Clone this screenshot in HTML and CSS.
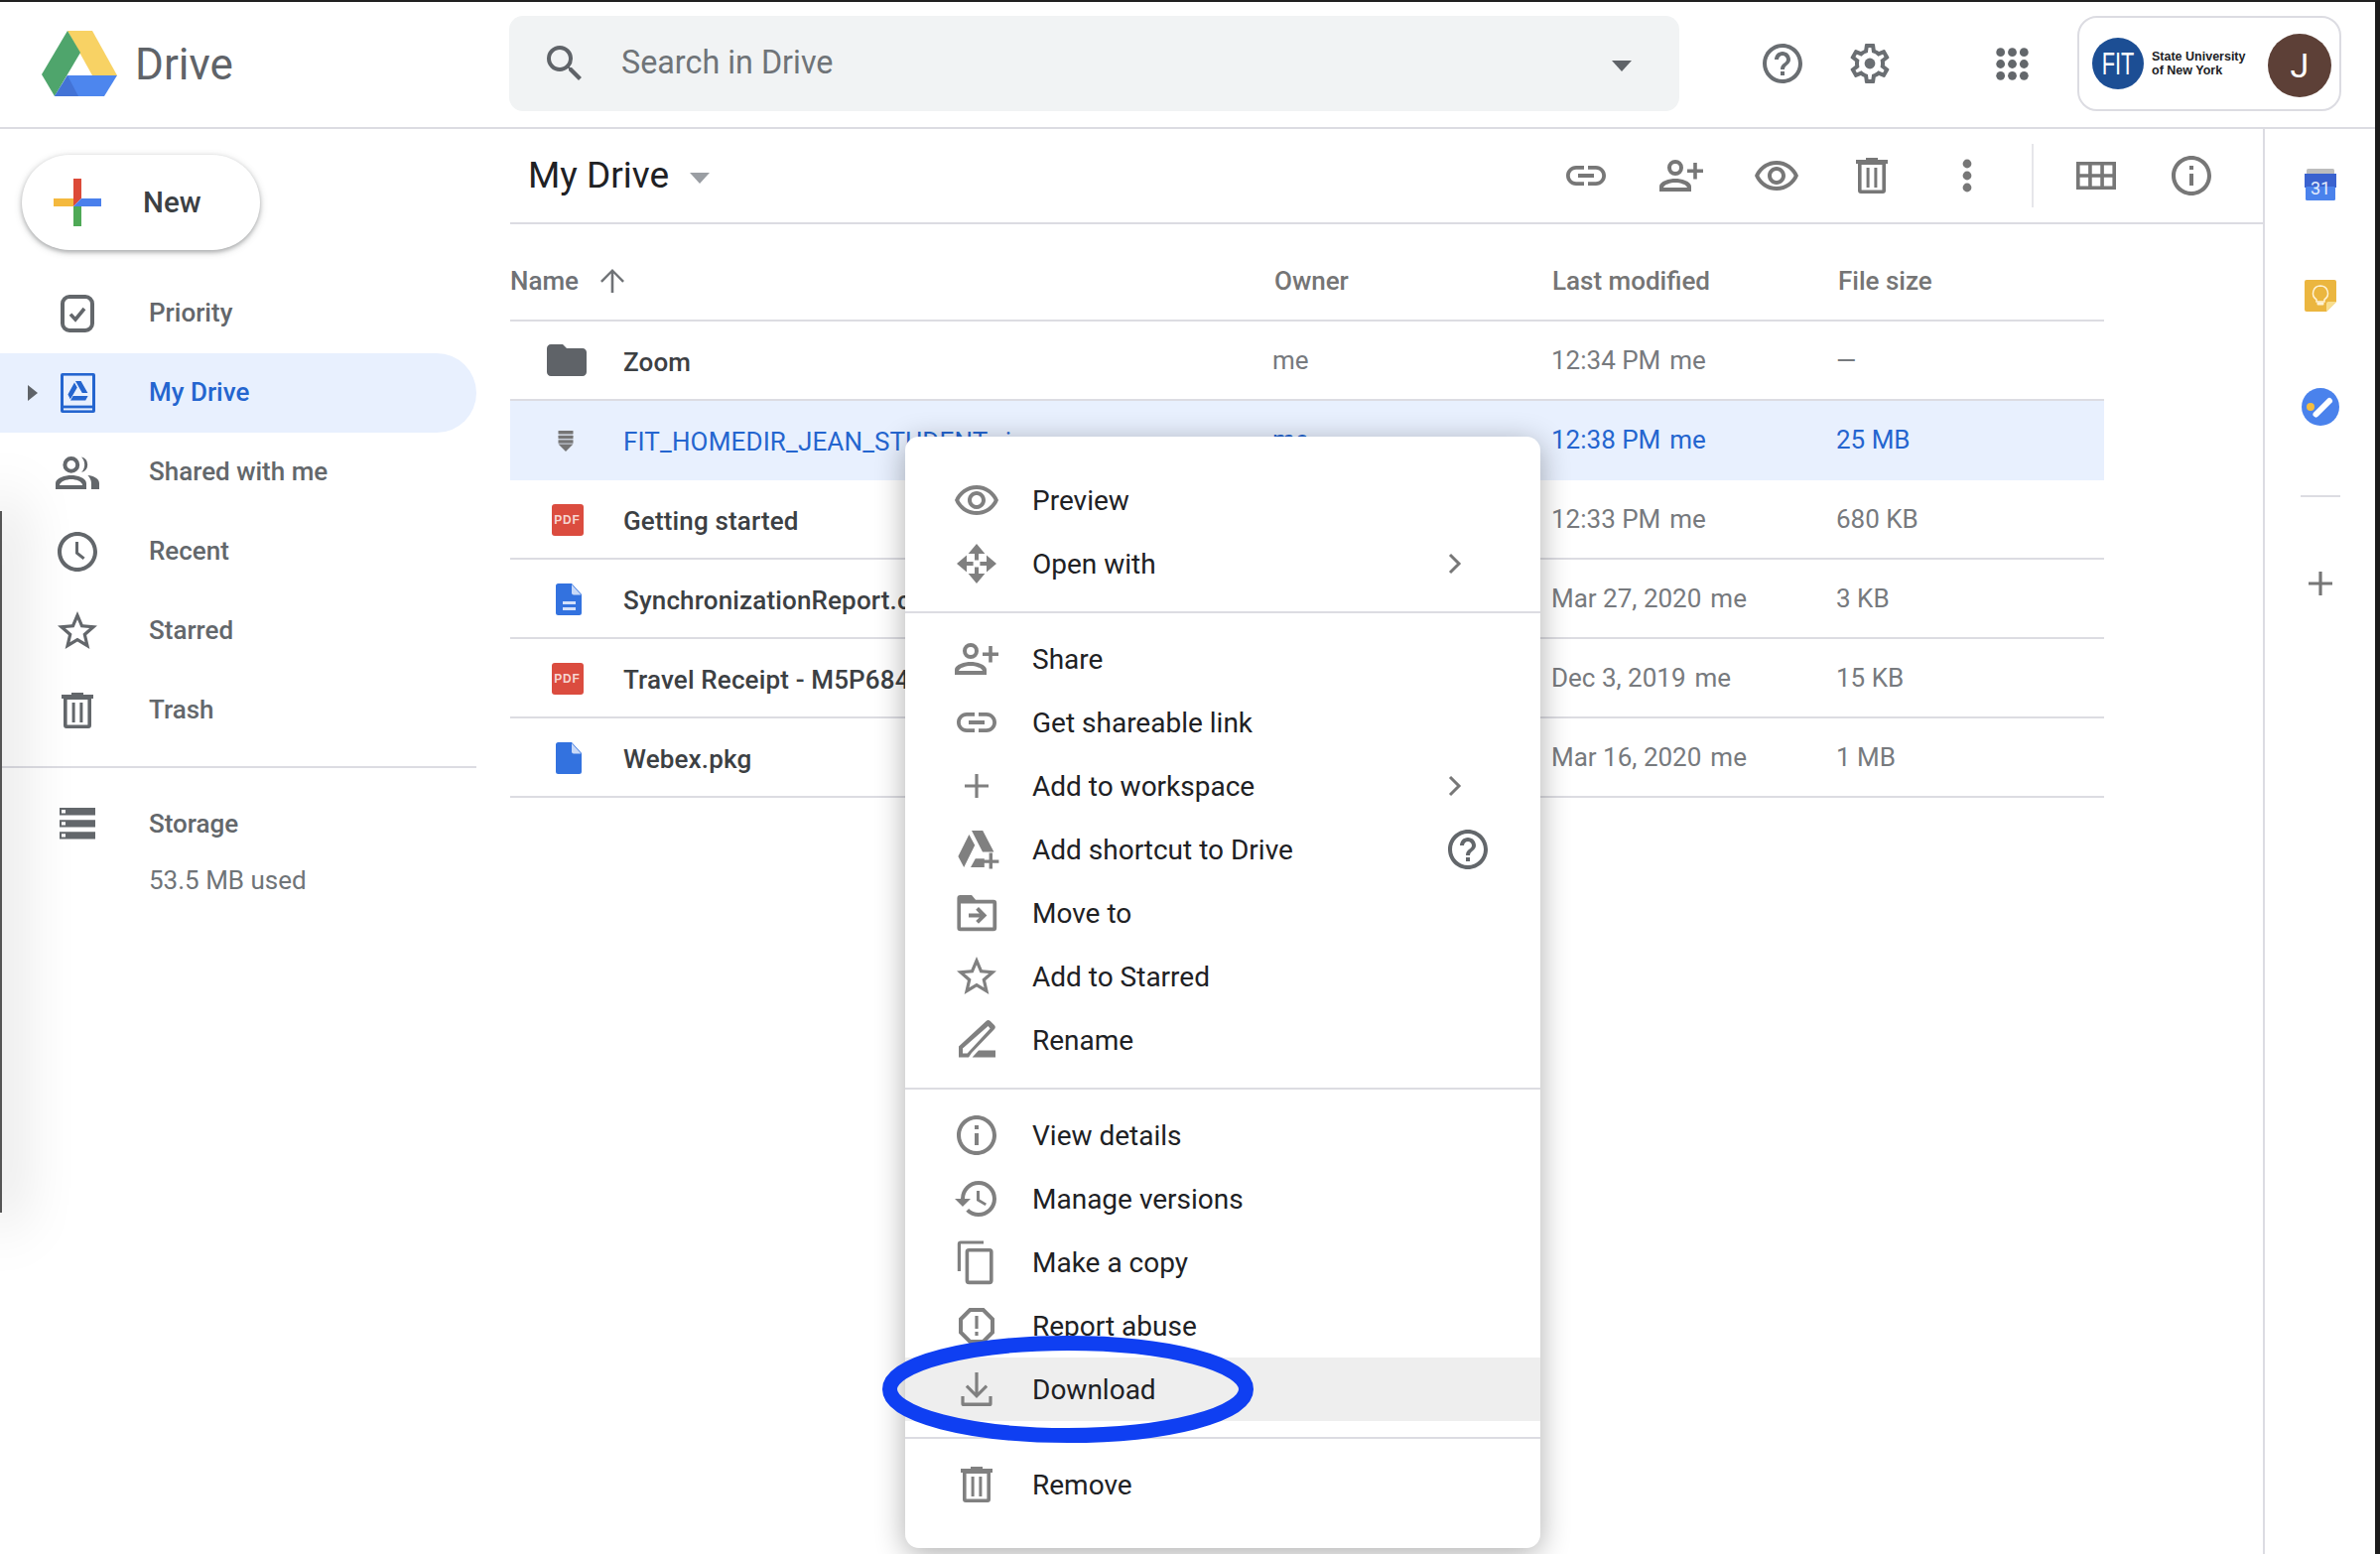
FILE: index.html
```html
<!DOCTYPE html>
<html lang="en">
<head>
<meta charset="utf-8">
<title>My Drive - Google Drive</title>
<link rel="stylesheet" href="styles.css">
</head>
<body>
<svg class="sprite" aria-hidden="true">
  <symbol id="i-search" viewBox="0 0 24 24"><path d="M15.5 14h-.79l-.28-.27A6.471 6.471 0 0 0 16 9.5 6.5 6.5 0 1 0 9.5 16c1.61 0 3.09-.59 4.23-1.57l.27.28v.79l5 4.99L20.49 19l-4.99-5zm-6 0C7.01 14 5 11.99 5 9.5S7.01 5 9.5 5 14 7.01 14 9.5 11.99 14 9.5 14z"/></symbol>
  <symbol id="i-help" viewBox="0 0 24 24"><path d="M11 18h2v-2h-2v2zm1-16C6.48 2 2 6.48 2 12s4.48 10 10 10 10-4.48 10-10S17.52 2 12 2zm0 18c-4.41 0-8-3.59-8-8s3.59-8 8-8 8 3.59 8 8-3.59 8-8 8zm0-14c-2.21 0-4 1.79-4 4h2c0-1.1.9-2 2-2s2 .9 2 2c0 2-3 1.75-3 5h2c0-2.25 3-2.5 3-5 0-2.21-1.79-4-4-4z"/></symbol>
  <symbol id="i-gear" viewBox="0 0 24 24"><path d="M19.43 12.98c.04-.32.07-.64.07-.98 0-.34-.03-.66-.07-.98l2.11-1.65c.19-.15.24-.42.12-.64l-2-3.46a.5.5 0 0 0-.61-.22l-2.49 1c-.52-.4-1.08-.73-1.69-.98l-.38-2.65A.488.488 0 0 0 14 2h-4c-.25 0-.46.18-.49.42l-.38 2.65c-.61.25-1.17.59-1.69.98l-2.49-1a.566.566 0 0 0-.18-.03c-.17 0-.34.09-.43.25l-2 3.46c-.13.22-.07.49.12.64l2.11 1.65c-.04.32-.07.65-.07.98 0 .33.03.66.07.98l-2.11 1.65c-.19.15-.24.42-.12.64l2 3.46a.5.5 0 0 0 .61.22l2.49-1c.52.4 1.08.73 1.69.98l.38 2.65c.03.24.24.42.49.42h4c.25 0 .46-.18.49-.42l.38-2.65c.61-.25 1.17-.59 1.69-.98l2.49 1c.06.02.12.03.18.03.17 0 .34-.09.43-.25l2-3.46c.12-.22.07-.49-.12-.64l-2.11-1.65zm-1.98-1.71c.04.31.05.52.05.73 0 .21-.02.43-.05.73l-.14 1.13.89.7 1.08.84-.7 1.21-1.27-.51-1.04-.42-.9.68c-.43.32-.84.56-1.25.73l-1.06.43-.16 1.13-.2 1.35h-1.4l-.19-1.35-.16-1.13-1.06-.43c-.43-.18-.83-.41-1.23-.71l-.91-.7-1.06.43-1.27.51-.7-1.21 1.08-.84.89-.7-.14-1.13c-.03-.31-.05-.54-.05-.74s.02-.43.05-.73l.14-1.13-.89-.7-1.08-.84.7-1.21 1.27.51 1.04.42.9-.68c.43-.32.84-.56 1.25-.73l1.06-.43.16-1.13.2-1.35h1.39l.19 1.35.16 1.13 1.06.43c.43.18.83.41 1.23.71l.91.7 1.06-.43 1.27-.51.7 1.21-1.07.85-.89.7.14 1.13z"/><circle cx="12" cy="12" r="2.7"/></symbol>
  <symbol id="i-apps" viewBox="0 0 24 24"><circle cx="3.4" cy="3.4" r="3.2"/><circle cx="12" cy="3.4" r="3.2"/><circle cx="20.6" cy="3.4" r="3.2"/><circle cx="3.4" cy="12" r="3.2"/><circle cx="12" cy="12" r="3.2"/><circle cx="20.6" cy="12" r="3.2"/><circle cx="3.4" cy="20.6" r="3.2"/><circle cx="12" cy="20.6" r="3.2"/><circle cx="20.6" cy="20.6" r="3.2"/></symbol>
  <symbol id="i-link" viewBox="0 0 24 24"><path d="M3.9 12c0-1.71 1.39-3.1 3.1-3.1h4V7H7c-2.76 0-5 2.24-5 5s2.24 5 5 5h4v-1.9H7c-1.71 0-3.1-1.39-3.1-3.1zM8 13h8v-2H8v2zm9-6h-4v1.9h4c1.71 0 3.1 1.39 3.1 3.1s-1.39 3.1-3.1 3.1h-4V17h4c2.76 0 5-2.24 5-5s-2.24-5-5-5z"/></symbol>
  <symbol id="i-share" viewBox="0 0 24 24"><path fill-rule="evenodd" d="M9 4a4 4 0 1 1 0 8 4 4 0 0 1 0-8zm0 2a2 2 0 1 0 0 4 2 2 0 0 0 0-4zM9 13.5c2.9 0 8 1.3 8 3.9V20H1v-2.6c0-2.6 5.1-3.9 8-3.9zm0 2c-2.4 0-5.7 1-6 2.5h12c-.3-1.5-3.6-2.5-6-2.5z"/><path d="M18.1 5.5h1.8v3.2H23v1.8h-3.1v3.2h-1.8v-3.2H15V8.7h3.1z"/></symbol>
  <symbol id="i-eye" viewBox="0 0 24 24"><path d="M12 6.5c3.79 0 7.17 2.13 8.82 5.5-1.65 3.37-5.02 5.5-8.82 5.5S4.83 15.37 3.18 12C4.83 8.63 8.21 6.5 12 6.5m0-2C7 4.5 2.73 7.61 1 12c1.73 4.39 6 7.5 11 7.5s9.27-3.11 11-7.5c-1.73-4.39-6-7.5-11-7.5zm0 5c1.38 0 2.5 1.12 2.5 2.5s-1.12 2.5-2.5 2.5-2.5-1.12-2.5-2.5 1.12-2.5 2.5-2.5m0-2c-2.48 0-4.5 2.02-4.5 4.5s2.02 4.5 4.5 4.5 4.5-2.02 4.5-4.5-2.02-4.5-4.5-4.5z"/></symbol>
  <symbol id="i-trash" viewBox="0 0 24 24"><path d="M9 3h6v1h5v2H4V4h5z"/><path fill-rule="evenodd" d="M5 6h14v13.5a1.5 1.5 0 0 1-1.5 1.5h-11A1.5 1.5 0 0 1 5 19.5zM6.8 6.5v12.7h10.4V6.5z"/><rect x="9.3" y="8" width="1.5" height="10"/><rect x="13.2" y="8" width="1.5" height="10"/></symbol>
  <symbol id="i-more" viewBox="0 0 24 24"><circle cx="12" cy="6" r="2.2"/><circle cx="12" cy="12" r="2.2"/><circle cx="12" cy="18" r="2.2"/></symbol>
  <symbol id="i-grid" viewBox="0 0 24 24"><path fill-rule="evenodd" d="M2 5h20v14H2zM3.8 6.8v4.3h4.27V6.8zm6.07 0v4.3h4.26V6.8zm6.06 0v4.3h4.27V6.8zM3.8 12.9v4.3h4.27v-4.3zm6.07 0v4.3h4.26v-4.3zm6.06 0v4.3h4.27v-4.3z"/></symbol>
  <symbol id="i-info" viewBox="0 0 24 24"><path d="M11 7h2v2h-2zm0 4h2v6h-2zm1-9C6.48 2 2 6.48 2 12s4.48 10 10 10 10-4.48 10-10S17.52 2 12 2zm0 18c-4.41 0-8-3.59-8-8s3.59-8 8-8 8 3.59 8 8-3.59 8-8 8z"/></symbol>
  <symbol id="i-check" viewBox="0 0 24 24"><rect x="4.5" y="3.5" width="15" height="17" rx="3.5" fill="none" stroke="currentColor" stroke-width="2"/><path d="M8.5 12.3l2.5 2.7 4.5-5.5" fill="none" stroke="currentColor" stroke-width="1.8"/></symbol>
  <symbol id="i-mydrive" viewBox="0 0 24 24"><rect x="3.5" y="2" width="17.5" height="20" rx="1"/><rect x="5" y="3.3" width="14.5" height="15" fill="#e8f0fe"/><rect x="5" y="19.7" width="14.5" height="1" fill="#e8f0fe"/><path d="M11 6h2.8l3.4 6h-2.8zM10.5 6.8l1.4 2.4-2.1 3.7-1.4 2.2-1.2-2.3zM9.8 13.5h7.5l-1.2 2.2H8.5z"/></symbol>
  <symbol id="i-people" viewBox="0 0 24 24"><path fill-rule="evenodd" d="M8.9 4a4.2 4.2 0 1 1 0 8.4 4.2 4.2 0 0 1 0-8.4zm0 2a2.2 2.2 0 1 0 0 4.4 2.2 2.2 0 0 0 0-4.4zM8.9 13.5c3 0 7.6 1.3 7.6 4V20.5H1v-3c0-2.7 4.9-4 7.9-4zm0 2c-2.4 0-5.5 1-5.9 3h11.6c-.3-2-3.3-3-5.7-3z"/><path d="M14 4.2a4 4 0 0 1 0 7.8c1-1 1.6-2.4 1.6-3.9S15 5.2 14 4.2zM17.2 13.5c3 .3 5.8 1.6 5.8 4v3h-4v-3c0-1.5-.7-2.8-1.8-4z"/></symbol>
  <symbol id="i-clock" viewBox="0 0 24 24"><path d="M11.99 2C6.47 2 2 6.48 2 12s4.47 10 9.99 10C17.52 22 22 17.52 22 12S17.52 2 11.99 2zM12 20c-4.42 0-8-3.58-8-8s3.58-8 8-8 8 3.58 8 8-3.58 8-8 8zm.5-13H11v6l3.8 3 1-1.1-3.3-2.7z"/></symbol>
  <symbol id="i-star" viewBox="0 0 24 24"><path d="M22 9.24l-7.19-.62L12 2 9.19 8.63 2 9.24l5.46 4.73L5.82 21 12 17.27 18.18 21l-1.63-7.03L22 9.24zM12 15.4l-3.76 2.27 1-4.28-3.32-2.88 4.38-.38L12 6.1l1.71 4.04 4.38.38-3.32 2.88 1 4.28L12 15.4z"/></symbol>
  <symbol id="i-storage" viewBox="0 0 24 24"><path fill-rule="evenodd" d="M3 4h18v3.7H3zm1 1v1.7h2V5zM3 10.1h18v3.7H3zm1 1v1.7h2v-1.7zM3 16.1h18v3.7H3zm1 1v1.7h2v-1.7z"/></symbol>
  <symbol id="i-folder" viewBox="0 0 24 24"><path d="M10 4H4c-1.1 0-1.99.9-1.99 2L2 18c0 1.1.9 2 2 2h16c1.1 0 2-.9 2-2V8c0-1.1-.9-2-2-2h-8l-2-2z"/></symbol>
  <symbol id="i-archive" viewBox="0 0 24 24"><rect x="4.5" y="2" width="15" height="3.6" rx=".5"/><rect x="4.5" y="6.8" width="15" height="3.4" rx=".5"/><rect x="4.5" y="11.3" width="15" height="3.4"/><path d="M4.5 15.5h15L12 23z"/></symbol>
  <symbol id="i-doc" viewBox="0 0 26 32"><path d="M2.5 0H16l10 11v18.5a2.5 2.5 0 0 1-2.5 2.5h-21A2.5 2.5 0 0 1 0 29.5v-27A2.5 2.5 0 0 1 2.5 0z"/><path d="M16 1l9.5 10.5H18a2 2 0 0 1-2-2z" fill="#c9d9f7"/></symbol>
  <symbol id="i-open" viewBox="0 0 24 24"><path d="M12 2l4.2 5H7.8zM12 22l-4.2-5h8.4zM2 12l5-4.2v8.4zM22 12l-5 4.2V7.8z"/><path d="M11 7h2v3.3h-2zM11 13.7h2V17h-2zM7 11h3.3v2H7zM13.7 11H17v2h-3.3z"/></symbol>
  <symbol id="i-plus" viewBox="0 0 24 24"><path d="M18 12.8h-5.2V18h-1.6v-5.2H6v-1.6h5.2V6h1.6v5.2H18z"/></symbol>
  <symbol id="i-shortcut" viewBox="0 0 24 24"><path d="M9.5 2.5h5.6l5.6 10.8h-5.7zM8.2 4.5l2.9 5.4-5.500 11.100-2.900-5.500zM9 21l2.400-4.400h4.500V21z"/><path d="M19.100 14.500h1.700v3.500h3.200v1.700h-3.200v2.800h-1.700v-2.800h-3.100V18h3.100z" transform="translate(-.8 -.8)"/></symbol>
  <symbol id="i-move" viewBox="0 0 24 24"><path fill-rule="evenodd" d="M3.8 3H9.5l2 2.4h9a1.600 1.600 0 0 1 1.600 1.600v12.500a1.600 1.600 0 0 1-1.600 1.600H3.800a1.600 1.600 0 0 1-1.600-1.600V4.600A1.600 1.600 0 0 1 3.800 3zM4 7.300V19.300h16.200V7.300z"/><path d="M13 9l4.200 4.200-4.200 4.200-1.400-1.400 1.800-1.800H8v-2h5.400l-1.800-1.800z"/></symbol>
  <symbol id="i-rename" viewBox="0 0 24 24"><path fill-rule="evenodd" d="M16.800 2.500a1.500 1.500 0 0 1 2.100 0l2 2a1.500 1.500 0 0 1 0 2.100L9.500 18.500 8 20.800H3v-5.500zM17.800 5L5 16.300v2.500h2.300L18.800 6.200z"/><path d="M13 17.300h8.500v3.500H9.800z"/></symbol>
  <symbol id="i-history" viewBox="0 0 24 24"><path d="M13 3a9 9 0 0 0-9 9H1l3.890 3.890.07.14L9 12H6c0-3.870 3.130-7 7-7s7 3.130 7 7-3.130 7-7 7c-1.930 0-3.680-.79-4.940-2.060l-1.420 1.420A8.954 8.954 0 0 0 13 21a9 9 0 0 0 0-18zm-1 5v5l4.280 2.540.72-1.210-3.500-2.080V8H12z"/></symbol>
  <symbol id="i-copy" viewBox="0 0 24 24"><path d="M15.500 1.200H4a1.600 1.600 0 0 0-1.600 1.600V16.500h1.600V2.800h11.500zM18.500 5H8.100a1.800 1.800 0 0 0-1.800 1.800v14.500a1.800 1.800 0 0 0 1.800 1.800h10.400a1.800 1.800 0 0 0 1.800-1.800V6.800A1.800 1.800 0 0 0 18.500 5zm0 16.300H8.100V6.800h10.400z"/></symbol>
  <symbol id="i-report" viewBox="0 0 24 24"><path d="M15.730 3H8.270L3 8.270v7.460L8.270 21h7.460L21 15.730V8.270L15.730 3zM19 14.900L14.900 19H9.100L5 14.900V9.100L9.100 5h5.800L19 9.100v5.800z"/><path d="M11.200 7h1.600v6.500h-1.600zM11.200 15h1.600v2h-1.600z"/></symbol>
  <symbol id="i-download" viewBox="0 0 24 24"><path d="M11.200 3.500h1.600v10l3.700-3.700 1.100 1.100L12 16.500 6.400 10.900l1.100-1.100 3.700 3.700zM4.200 15.500h1.600v3.300h12.400v-3.300h1.600v3.700a1.300 1.300 0 0 1-1.300 1.300H5.500a1.300 1.300 0 0 1-1.300-1.300z"/></symbol>
  <symbol id="i-chevron" viewBox="0 0 24 24"><path d="M9.500 7.500l4.500 4.500-4.500 4.500" fill="none" stroke="currentColor" stroke-width="1.500"/></symbol>
</svg>

<div class="page">
  <header class="topbar">
    <div class="brand">
      <svg class="logo" viewBox="0 0 76 66" aria-hidden="true">
        <polygon points="26,0 51,0 76,45 51,45" fill="#f8d264"/>
        <polygon points="26,0 39,22 13,66 0,44" fill="#4fa56c"/>
        <polygon points="26,45 76,45 63,66 13,66" fill="#4d86ee"/>
        <polygon points="26,45 37,66 13,66" fill="#4373d6"/>
      </svg>
      <span class="brand-name">Drive</span>
    </div>
    <div class="search">
      <svg class="ic ic-dark"><use href="#i-search"/></svg>
      <span class="search-text">Search in Drive</span>
      <span class="caret search-caret"></span>
    </div>
    <svg class="ic ic-help"><use href="#i-help"/></svg>
    <svg class="ic ic-gear"><use href="#i-gear"/></svg>
    <svg class="ic-apps"><use href="#i-apps"/></svg>
    <div class="account">
      <div class="fit"><span class="fit-letters">FIT</span></div>
      <div class="fit-name"><span>State University</span><span>of New York</span></div>
      <div class="avatar">J</div>
    </div>
  </header>

  <div class="body">
    <aside class="sidebar">
      <button class="new-btn">
        <svg class="new-plus" viewBox="0 0 48 48" aria-hidden="true">
          <polygon points="20,0 28,0 28,20 20,28" fill="#dc4a38"/>
          <polygon points="28,20 48,20 48,28 20,28" fill="#4a80ec"/>
          <polygon points="20,28 28,28 28,48 20,48" fill="#4fa956"/>
          <polygon points="0,20 20,20 20,28 0,28" fill="#f4b93e"/>
        </svg>
        <span>New</span>
      </button>
      <nav class="nav">
        <a class="nav-item"><span class="nav-slot"></span><svg class="ic"><use href="#i-check"/></svg><span>Priority</span></a>
        <a class="nav-item active"><span class="nav-slot"><span class="nav-arrow"></span></span><svg class="ic"><use href="#i-mydrive"/></svg><span>My Drive</span></a>
        <a class="nav-item"><span class="nav-slot"></span><svg class="ic"><use href="#i-people"/></svg><span>Shared with me</span></a>
        <a class="nav-item"><span class="nav-slot"></span><svg class="ic"><use href="#i-clock"/></svg><span>Recent</span></a>
        <a class="nav-item"><span class="nav-slot"></span><svg class="ic"><use href="#i-star"/></svg><span>Starred</span></a>
        <a class="nav-item"><span class="nav-slot"></span><svg class="ic"><use href="#i-trash"/></svg><span>Trash</span></a>
      </nav>
      <div class="side-rule"></div>
      <div class="nav-item storage"><span class="nav-slot"></span><svg class="ic"><use href="#i-storage"/></svg><span>Storage</span></div>
      <div class="used">53.5 MB used</div>
    </aside>

    <main class="main">
      <div class="toolbar">
        <span class="crumb">My Drive</span>
        <span class="caret crumb-caret"></span>
        <div class="tools">
          <svg class="ic ic-tool"><use href="#i-link"/></svg>
          <svg class="ic ic-tool"><use href="#i-share"/></svg>
          <svg class="ic ic-tool"><use href="#i-eye"/></svg>
          <svg class="ic ic-tool"><use href="#i-trash"/></svg>
          <svg class="ic ic-tool"><use href="#i-more"/></svg>
          <span class="tool-sep"></span>
          <svg class="ic ic-tool"><use href="#i-grid"/></svg>
          <svg class="ic ic-tool"><use href="#i-info"/></svg>
        </div>
      </div>
      <div class="table">
        <div class="row head">
          <div class="cell-name"><span>Name</span><svg class="sort" viewBox="0 0 24 24" aria-hidden="true"><path d="M12 0l12 12-1.800 1.800-8.900-9.200V24h-2.600V4.600l-8.900 9.200L0 12z"/></svg></div>
          <div class="cell-owner">Owner</div>
          <div class="cell-mod">Last modified</div>
          <div class="cell-size">File size</div>
        </div>
        <div class="row">
          <div class="cell-name"><span class="file-icon"><svg class="ic ic-file"><use href="#i-folder"/></svg></span><span class="fname">Zoom</span></div>
          <div class="cell-owner">me</div>
          <div class="cell-mod"><span class="when">12:34 PM</span><span>me</span></div>
          <div class="cell-size">—</div>
        </div>
        <div class="row selected">
          <div class="cell-name"><span class="file-icon"><svg class="ic-zip"><use href="#i-archive"/></svg></span><span class="fname">FIT_HOMEDIR_JEAN_STUDENT.zip</span></div>
          <div class="cell-owner">me</div>
          <div class="cell-mod"><span class="when">12:38 PM</span><span>me</span></div>
          <div class="cell-size">25 MB</div>
        </div>
        <div class="row">
          <div class="cell-name"><span class="file-icon"><span class="pdf">PDF</span></span><span class="fname">Getting started</span></div>
          <div class="cell-owner">me</div>
          <div class="cell-mod"><span class="when">12:33 PM</span><span>me</span></div>
          <div class="cell-size">680 KB</div>
        </div>
        <div class="row">
          <div class="cell-name"><span class="file-icon"><span class="doc"><svg class="doc-shape"><use href="#i-doc"/></svg><span class="doc-lines"></span></span></span><span class="fname">SynchronizationReport.csv</span></div>
          <div class="cell-owner">me</div>
          <div class="cell-mod"><span class="when">Mar 27, 2020</span><span>me</span></div>
          <div class="cell-size">3 KB</div>
        </div>
        <div class="row">
          <div class="cell-name"><span class="file-icon"><span class="pdf">PDF</span></span><span class="fname">Travel Receipt - M5P684.pdf</span></div>
          <div class="cell-owner">me</div>
          <div class="cell-mod"><span class="when">Dec 3, 2019</span><span>me</span></div>
          <div class="cell-size">15 KB</div>
        </div>
        <div class="row">
          <div class="cell-name"><span class="file-icon"><span class="doc"><svg class="doc-shape"><use href="#i-doc"/></svg></span></span><span class="fname">Webex.pkg</span></div>
          <div class="cell-owner">me</div>
          <div class="cell-mod"><span class="when">Mar 16, 2020</span><span>me</span></div>
          <div class="cell-size">1 MB</div>
        </div>
      </div>
    </main>

    <aside class="rail">
      <svg class="rail-icon" viewBox="0 0 32 32" aria-hidden="true">
        <rect x="2" y="0" width="28" height="8" rx="1.500" fill="#bdbdbd"/>
        <rect x="0" y="5" width="32" height="14" fill="#3a62cf"/>
        <rect x="1" y="18" width="30" height="14" rx="1.500" fill="#4a82ec"/>
        <text x="16" y="26" text-anchor="middle" class="cal-num">31</text>
      </svg>
      <svg class="rail-icon" viewBox="0 0 32 32" aria-hidden="true">
        <path d="M2 0h28a2 2 0 0 1 2 2v20L22 32H2a2 2 0 0 1-2-2V2a2 2 0 0 1 2-2z" fill="#ebb63f"/>
        <path d="M32 22H24a2 2 0 0 0-2 2v8z" fill="#f8de8e"/>
        <path d="M16 6a7.500 7.500 0 0 1 4 13.800V22h-8v-2.200A7.500 7.500 0 0 1 16 6z" fill="none" stroke="#fff3d6" stroke-width="1.500"/>
        <rect x="12.500" y="22.500" width="7" height="3" rx="1" fill="#fff3d6"/>
      </svg>
      <svg class="rail-icon rail-tasks" viewBox="0 0 38 38" aria-hidden="true">
        <circle cx="19" cy="19" r="19" fill="#4a82ec"/>
        <path d="M14.500 26.500L28 13" stroke="#fff" stroke-width="6" stroke-linecap="round"/>
        <circle cx="9" cy="19" r="4" fill="#f4bd3f"/>
      </svg>
      <div class="rail-rule"></div>
      <svg class="ic ic-railplus"><use href="#i-plus"/></svg>
    </aside>
  </div>

  <div class="left-edge"></div>

  <div class="menu">
    <div class="mi"><svg class="ic"><use href="#i-eye"/></svg><span>Preview</span></div>
    <div class="mi"><svg class="ic"><use href="#i-open"/></svg><span>Open with</span><svg class="mi-chev"><use href="#i-chevron"/></svg></div>
    <div class="mi-rule"></div>
    <div class="mi"><svg class="ic"><use href="#i-share"/></svg><span>Share</span></div>
    <div class="mi"><svg class="ic"><use href="#i-link"/></svg><span>Get shareable link</span></div>
    <div class="mi"><svg class="ic"><use href="#i-plus"/></svg><span>Add to workspace</span><svg class="mi-chev"><use href="#i-chevron"/></svg></div>
    <div class="mi"><svg class="ic"><use href="#i-shortcut"/></svg><span>Add shortcut to Drive</span><svg class="ic mi-help"><use href="#i-help"/></svg></div>
    <div class="mi"><svg class="ic"><use href="#i-move"/></svg><span>Move to</span></div>
    <div class="mi"><svg class="ic"><use href="#i-star"/></svg><span>Add to Starred</span></div>
    <div class="mi"><svg class="ic"><use href="#i-rename"/></svg><span>Rename</span></div>
    <div class="mi-rule"></div>
    <div class="mi"><svg class="ic"><use href="#i-info"/></svg><span>View details</span></div>
    <div class="mi"><svg class="ic"><use href="#i-history"/></svg><span>Manage versions</span></div>
    <div class="mi"><svg class="ic"><use href="#i-copy"/></svg><span>Make a copy</span></div>
    <div class="mi"><svg class="ic"><use href="#i-report"/></svg><span>Report abuse</span></div>
    <div class="mi hover"><svg class="ic"><use href="#i-download"/></svg><span>Download</span></div>
    <div class="mi-rule"></div>
    <div class="mi"><svg class="ic"><use href="#i-trash"/></svg><span>Remove</span></div>
  </div>

  <svg class="callout" viewBox="0 0 374 108" aria-hidden="true">
    <ellipse cx="187" cy="54" rx="179.500" ry="46.500" fill="none" stroke="#0f3ff2" stroke-width="15"/>
  </svg>
</div>
</body>
</html>
```
FILE: styles.css
```css
* { box-sizing: border-box; }
html, body { margin: 0; padding: 0; background: #fff; }
body { font-family: Roboto, "Liberation Sans", sans-serif; color: #3c4043; }

.sprite { display: none; }

.page {
  position: relative;
  width: 2398px;
  height: 1566px;
  border-top: 2px solid #212121;
  border-right: 5px solid #1c1c1c;
  overflow: hidden;
  background: #fff;
}

.ic { width: 48px; height: 48px; fill: currentColor; flex: none; }

/* Top bar */
.topbar {
  display: flex;
  align-items: center;
  height: 128px;
  padding-bottom: 2px;
  border-bottom: 2px solid #dcdce2;
  color: #5f6368;
}
.brand { width: 513px; display: flex; align-items: center; padding-left: 42px; flex: none; }
.logo { width: 76px; height: 66px; flex: none; }
.brand-name { margin-left: 18px; margin-top: 2px; font-size: 44px; color: #5f6368; }

.search {
  width: 1179px;
  height: 96px;
  flex: none;
  display: flex;
  align-items: center;
  padding-left: 32px;
  padding-right: 48px;
  background: #f1f3f4;
  border-radius: 14px;
}
.ic-dark { color: #5f6368; }
.search-text { margin-left: 33px; margin-bottom: 2px; font-size: 32.3px; color: #6f7478; }

.caret {
  width: 0;
  height: 0;
  border-left: 10px solid transparent;
  border-right: 10px solid transparent;
  border-top: 11px solid #5f6368;
}
.search-caret { margin-left: auto; margin-top: 4px; }

.ic-help { margin-left: 80px; color: #6a6e72; }
.ic-gear { margin-left: 40px; color: #6a6e72; }
.ic-apps { margin-left: 103px; width: 33px; height: 33px; fill: #63676b; flex: none; }
.account {
  margin-left: 49px;
  width: 266px;
  height: 96px;
  flex: none;
  display: flex;
  align-items: center;
  padding-left: 13px;
  border: 2px solid #dcdce2;
  border-radius: 20px;
}
.fit {
  width: 52px;
  height: 52px;
  border-radius: 50%;
  flex: none;
  display: flex;
  align-items: center;
  justify-content: center;
  background: #1c4e94;
  color: #fff;
  font-family: "Liberation Sans", sans-serif;
  font-size: 32px;
}
.fit-letters { display: inline-block; transform: scaleX(.68); }
.fit-name {
  margin-left: 8px;
  width: 104px;
  flex: none;
  display: flex;
  flex-direction: column;
  font-family: "Liberation Sans", sans-serif;
  font-weight: 700;
  font-size: 12.5px;
  line-height: 14px;
  color: #202124;
}
.avatar {
  width: 64px;
  height: 64px;
  margin-left: 13px;
  margin-top: 4px;
  border-radius: 50%;
  flex: none;
  display: flex;
  align-items: center;
  justify-content: center;
  background: #5d4037;
  color: #fff;
  font-size: 34px;
}

/* Layout */
.body { display: flex; height: 1436px; }

/* Sidebar */
.sidebar { width: 514px; flex: none; padding-top: 26px; }
.new-btn {
  display: flex;
  align-items: center;
  width: 240px;
  height: 96px;
  margin-left: 22px;
  padding: 0 0 0 32px;
  border: 0;
  border-radius: 48px;
  background: #fff;
  box-shadow: 0 2px 4px rgba(60, 64, 67, .35), 0 2px 8px rgba(60, 64, 67, .2);
  font-family: inherit;
  font-size: 29.5px;
  font-weight: 500;
  color: #3c4043;
}
.new-plus { width: 48px; height: 48px; margin-right: 42px; flex: none; }

.nav { margin-top: 24px; }
.nav-item {
  display: flex;
  align-items: center;
  width: 480px;
  height: 80px;
  font-size: 26px;
  font-weight: 500;
  color: #63676b;
  border-radius: 0 40px 40px 0;
}
.nav-item > span:last-child { margin-left: 48px; margin-bottom: 2px; }
.nav-slot { width: 54px; flex: none; display: flex; padding-left: 28px; }
.nav-arrow {
  width: 0;
  height: 0;
  border-top: 8px solid transparent;
  border-bottom: 8px solid transparent;
  border-left: 10px solid #5f6368;
}
.nav-item.active { background: #e8f0fe; color: #2465cf; }
.side-rule { width: 480px; height: 2px; margin-top: 16px; background: #dcdce2; }
.storage { height: 60px; margin-top: 26px; }
.storage > span:last-child { margin-bottom: 0; }
.used { margin-top: 7px; padding-left: 150px; font-size: 26px; line-height: 40px; color: #6f7478; }

/* Main */
.main { width: 1768px; flex: none; border-right: 2px solid #dcdce2; }
.toolbar {
  display: flex;
  align-items: center;
  height: 96px;
  padding-left: 18px;
  border-bottom: 2px solid #dcdce2;
}
.crumb { font-size: 37px; margin-bottom: 2px; color: #202124; }
.crumb-caret { margin-left: 21px; margin-top: 4px; border-top-color: #9a9ea3; }
.tools { margin-left: auto; display: flex; align-items: center; padding-right: 48px; gap: 48px; }
.ic-tool { color: #777; }
.tool-sep { width: 2px; height: 64px; margin: 0 -9px 0 -7px; background: #e6e6ea; }

.table { width: 1606px; }
.row {
  display: grid;
  grid-template-columns: 768px 281px 287px 1fr;
  align-items: center;
  height: 80px;
  border-bottom: 2px solid #dcdce2;
  font-size: 26px;
  color: #777a7e;
}
.head { height: 98px; padding-top: 18px; font-weight: 500; color: #757575; }
.head .cell-name { color: #6f7276; }
.head .cell-owner { padding-left: 2px; }
.head .cell-mod { padding-left: 1px; }
.head .cell-size { padding-left: 2px; }
.sort { width: 24px; height: 24px; margin-left: 22px; fill: #6f7276; }
.cell-name { display: flex; align-items: center; white-space: nowrap; min-width: 0; }
.fname { padding-top: 4px; font-weight: 500; color: #3c4043; letter-spacing: .15px; }
.file-icon { width: 114px; flex: none; display: flex; justify-content: center; }
.ic-file { color: #5f6368; margin-right: 1px; }
.ic-zip { width: 24px; height: 24px; fill: #757575; margin-right: 2px; margin-top: 1px; }
.when { margin-right: 9px; }
.selected { background: #e8f0fe; border-bottom-color: transparent; color: #2465cf; }
.selected .fname { color: #2465cf; font-weight: 400; }

.pdf {
  width: 32px;
  height: 32px;
  margin-left: 1px;
  margin-top: 2px;
  display: flex;
  align-items: center;
  justify-content: center;
  border-radius: 3px;
  background: #db4c3f;
  color: #f6d5d1;
  font-family: "Liberation Sans", sans-serif;
  font-size: 12px;
  font-weight: 700;
  letter-spacing: .8px;
}
.doc { position: relative; width: 26px; height: 32px; margin-left: 4px; margin-top: 1px; }
.doc-shape { display: block; width: 26px; height: 32px; fill: #3372df; }
.doc-lines {
  position: absolute;
  left: 7px;
  top: 18px;
  width: 13px;
  height: 9px;
  border-top: 3px solid #d3e0fa;
  border-bottom: 3px solid #d3e0fa;
}

/* Right rail */
.rail { flex: 1; display: flex; flex-direction: column; align-items: center; padding-top: 40px; }
.rail-icon { width: 32px; height: 32px; flex: none; margin-bottom: 80px; }
.rail-tasks { width: 38px; height: 38px; margin-top: -3px; margin-bottom: 0; }
.cal-num { font-family: Roboto, sans-serif; font-size: 18px; fill: #e4ecfc; }
.rail-rule { width: 40px; height: 2px; margin-top: 70px; background: #dcdce2; }
.ic-railplus { margin-top: 63px; color: #777; }

/* Edge of the window behind this one */
.left-edge {
  position: absolute;
  left: -1px;
  top: 513px;
  width: 3px;
  height: 707px;
  background: #555;
  box-shadow: 0 0 60px 12px rgba(0, 0, 0, .17);
}

/* Context menu */
.menu {
  position: absolute;
  left: 912px;
  top: 438px;
  width: 640px;
  height: 1120px;
  padding-top: 32px;
  background: #fff;
  border-radius: 14px;
  box-shadow: 0 6px 30px rgba(0, 0, 0, .32);
  color: #202124;
  font-size: 28px;
}
.mi { display: flex; align-items: center; height: 64px; padding-left: 48px; }
.mi .ic { color: #808080; }
.mi > span { margin-left: 32px; }
.mi-chev { width: 48px; height: 48px; margin-left: auto; margin-right: 62px; color: #777; flex: none; }
.mi .mi-help { margin-left: auto; margin-right: 49px; color: #63676b; }
.hover { background: #eee; }
.mi-rule { height: 2px; margin: 16px 0 14px; background: #dcdce2; }

.callout { position: absolute; left: 889px; top: 1344px; width: 374px; height: 108px; }
```
